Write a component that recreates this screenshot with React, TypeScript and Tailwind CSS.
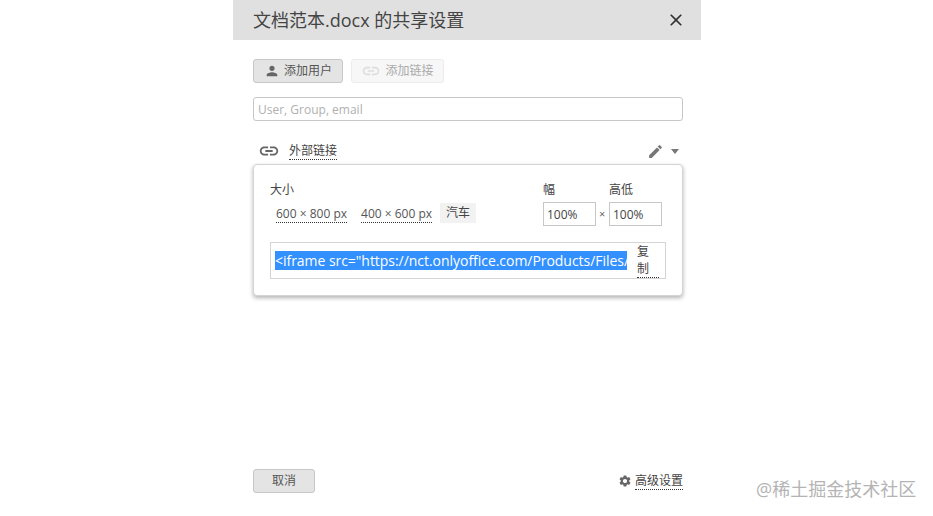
import React from "react";
import { MdClose, MdEdit, MdLink, MdPerson, MdSettings } from "react-icons/md";

const FONT = "font-['Open_Sans','Noto_Sans_CJK_SC',sans-serif]";

export default function App() {
  return (
    <div className={`relative h-[516px] w-[933px] overflow-hidden bg-white text-[#333] ${FONT}`}>
      <div className="ml-[233px] flex h-full w-[468px] flex-col">
        {/* Header */}
        <div className="flex h-10 shrink-0 items-center justify-between bg-[#e0e0e0] pl-5 pr-[15px]">
          <h1 className="text-[18px] font-normal leading-none text-[#444]">文档范本.docx 的共享设置</h1>
          <MdClose className="h-[20px] w-[20px] text-[#333]" />
        </div>

        <div className="flex flex-1 flex-col pb-[23px] pl-5 pr-[18px] pt-[19px]">
          {/* Add buttons */}
          <div className="flex gap-2">
            <button className="flex h-6 w-[90px] items-center justify-center gap-[4px] rounded-[3px] border border-[#c7c7c7] bg-[#e4e4e4] text-[12px] text-[#555]">
              <MdPerson className="h-[16px] w-[16px] text-[#666]" />
              添加用户
            </button>
            <button className="flex h-6 w-[93px] items-center justify-center gap-[4px] rounded-[3px] border border-[#ececec] bg-[#f7f7f7] text-[12px] text-[#aaa]">
              <MdLink className="h-[20px] w-[20px] text-[#ddd]" />
              添加链接
            </button>
          </div>

          <input
            className="mt-[14px] h-6 w-full rounded-[3px] border border-[#c7c7c7] px-1 text-[12px] outline-none placeholder:text-[#b0b0b0]"
            placeholder="User, Group, email"
          />

          {/* External link row */}
          <div className="mt-[20px] flex h-[20px] items-center justify-between pl-[5px] pr-[4px]">
            <div className="flex items-center gap-[9px]">
              <MdLink className="h-[22px] w-[22px] text-[#666]" />
              <span className="border-b border-dotted border-[#333] text-[12px] leading-[17px] text-[#444]">外部链接</span>
            </div>
            <div className="flex items-center gap-[7px]">
              <MdEdit className="h-[17px] w-[17px] text-[#777]" />
              <span className="h-0 w-0 border-x-[4px] border-t-[5px] border-x-transparent border-t-[#777]" />
            </div>
          </div>

          {/* Embed card */}
          <div className="mt-[3px] h-[132px] rounded-[4px] border border-[#d4d4d4] bg-white px-4 pt-[16px] shadow-[0_2px_4px_rgba(0,0,0,0.3)]">
            <div className="flex justify-between">
              <div>
                <div className="mt-[1px] text-[12px] leading-[16px] text-[#444]">大小</div>
                <div className="mt-[5px] flex items-center pl-[6px] text-[12px] text-[#555]">
                  <span className="mt-[2px] border-b border-dotted border-[#333] leading-[16px]">600 × 800 px</span>
                  <span className="ml-[14px] mt-[2px] border-b border-dotted border-[#333] leading-[16px]">400 × 600 px</span>
                  <span className="ml-2 flex h-[20px] w-9 items-center justify-center bg-[#f2f2f2] text-[#444]">汽车</span>
                </div>
              </div>
              <div className="mr-[4px] flex gap-[13px] text-[12px] text-[#444]">
                <div className="w-[53px]">
                  <div className="mt-[1px] leading-[16px]">幅</div>
                  <input readOnly value="100%" className="mt-[4px] h-6 w-[53px] border border-[#c7c7c7] px-[3px] text-[12px] text-[#444] outline-none" />
                </div>
                <div className="relative w-[53px]">
                  <span className="absolute left-[-10px] top-[25px] text-[11px] text-[#666]">×</span>
                  <div className="mt-[1px] leading-[16px]">高低</div>
                  <input readOnly value="100%" className="mt-[4px] h-6 w-[53px] border border-[#c7c7c7] px-[3px] text-[12px] text-[#444] outline-none" />
                </div>
              </div>
            </div>

            {/* Code field */}
            <div className="mt-[16px] flex h-[37px] items-center justify-between border border-[#d4d4d4] pl-[4px] pr-[6px]">
              <span className="h-[19px] w-[352px] overflow-hidden whitespace-nowrap bg-[#3390ff] text-[14px] leading-[19px] tracking-[-0.04px] text-white">
                &lt;iframe src="https://nct.onlyoffice.com/Products/Files/
              </span>
              <span className="w-[22px] border-b border-dotted border-[#333] text-[12px] leading-[17px] text-[#444]">复制</span>
            </div>
          </div>

          {/* Footer */}
          <div className="mt-auto flex items-center justify-between">
            <button className="h-6 w-[62px] rounded-[3px] border border-[#c7c7c7] bg-[#e4e4e4] text-[12px] text-[#555]">取消</button>
            <div className="flex items-center gap-[3px]">
              <MdSettings className="h-[14px] w-[14px] text-[#666]" />
              <span className="border-b border-dotted border-[#333] text-[12px] leading-[16px] text-[#444]">高级设置</span>
            </div>
          </div>
        </div>
      </div>

      {/* Watermark */}
      <div className="absolute left-[756px] top-[478px] text-[18px] leading-[22px] text-[#b4b4b4]">@稀土掘金技术社区</div>
    </div>
  );
}
